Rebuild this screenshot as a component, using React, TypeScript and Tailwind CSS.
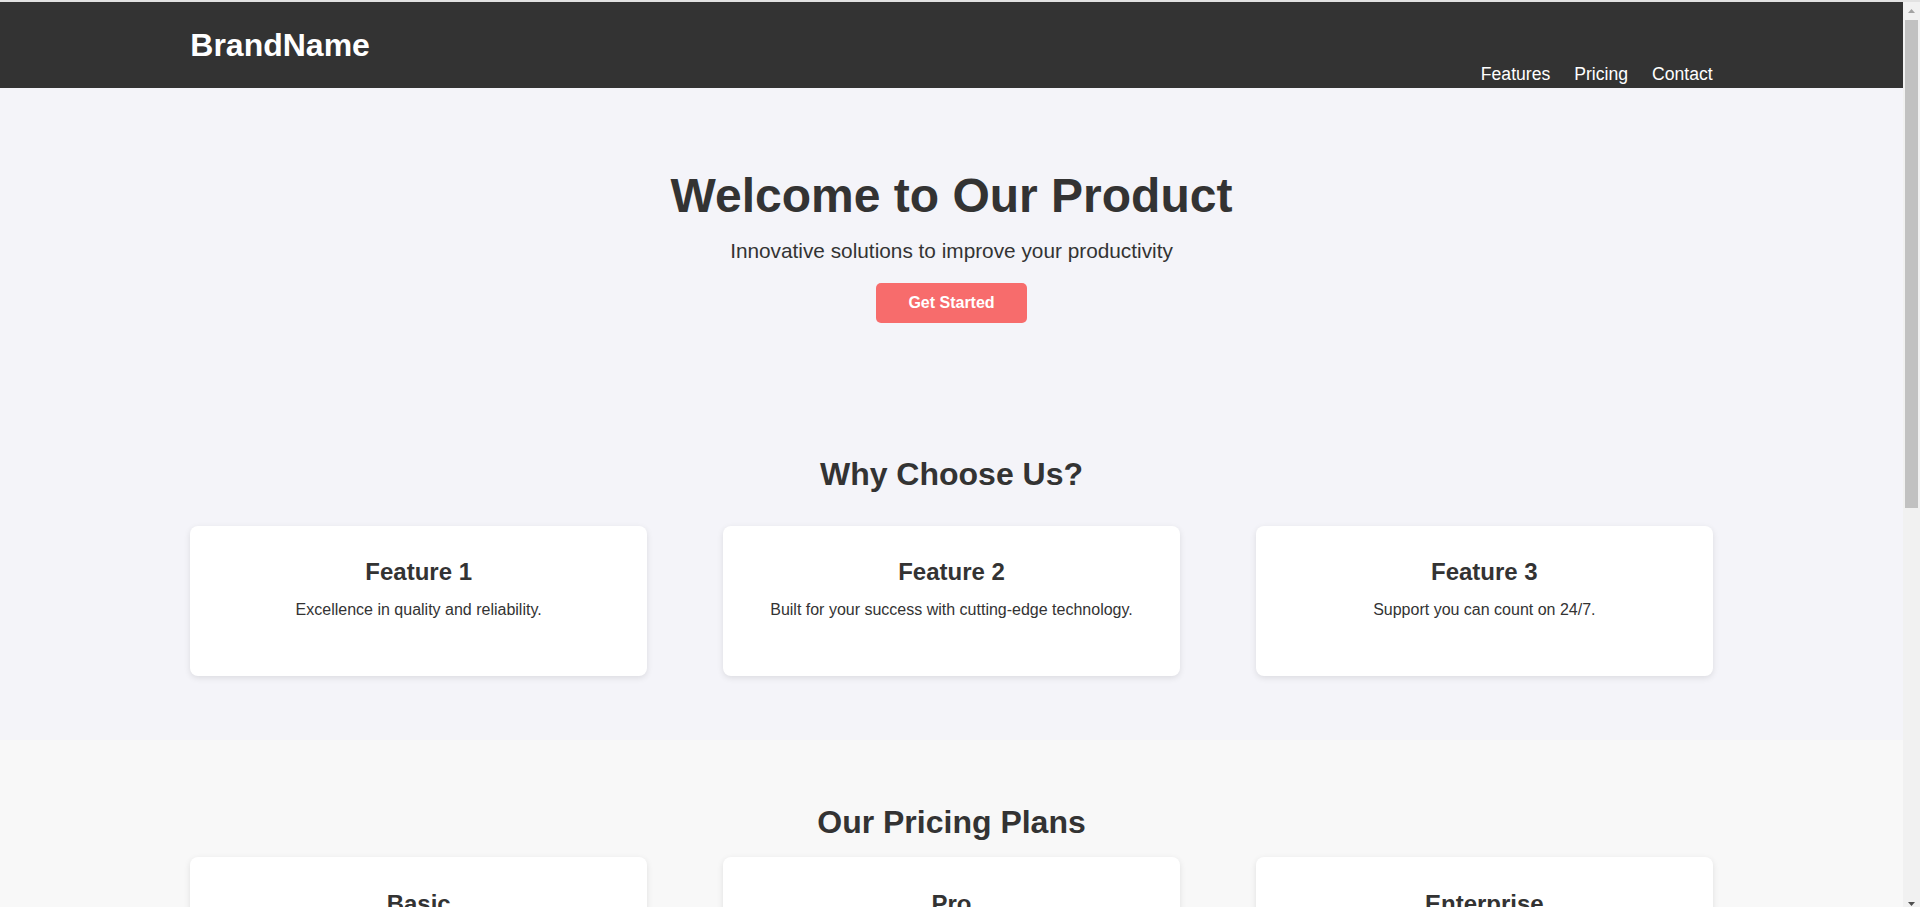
import React from "react";

const features = [
  { title: "Feature 1", text: "Excellence in quality and reliability." },
  { title: "Feature 2", text: "Built for your success with cutting-edge technology." },
  { title: "Feature 3", text: "Support you can count on 24/7." },
];

const plans = [
  { name: "Basic", price: "$9/month", items: ["Feature A", "Feature B", "Email Support"] },
  { name: "Pro", price: "$29/month", items: ["Everything in Basic", "Feature C", "Priority Support"] },
  { name: "Enterprise", price: "$99/month", items: ["Everything in Pro", "Dedicated Manager", "24/7 Phone Support"] },
];

function Scrollbar() {
  return (
    <div className="w-[17px] h-[910px] shrink-0 self-start bg-[#f1f1f1] flex flex-col">
      <div className="h-[17px] flex items-center justify-center">
        <svg width="7" height="4" viewBox="0 0 7 4">
          <polygon points="3.5,0 7,4 0,4" fill="#a3a3a3" />
        </svg>
      </div>
      <div className="mt-[1px] mx-[2px] h-[488px] bg-[#c1c1c1]" />
      <div className="flex-1" />
      <div className="h-[17px] flex items-center justify-center">
        <svg width="7" height="4" viewBox="0 0 7 4">
          <polygon points="0,0 7,0 3.5,4" fill="#505050" />
        </svg>
      </div>
    </div>
  );
}

export default function App() {
  return (
    <div className="font-['Liberation_Sans',Arial,sans-serif] text-[#333] bg-[#f4f4f9] overflow-hidden">
      <div className="h-[2px] bg-[#e2e2e2]" />
      <div className="flex">
        <div className="flex-1 min-w-0">
          <header className="bg-[#333] text-white h-[86px]">
            <div className="w-[80%] mx-auto flex justify-between items-start">
              <h1 className="text-[32px] font-bold leading-[37px] mt-[25px]">BrandName</h1>
              <nav className="mt-[62px] flex gap-[24px] text-[17.6px] leading-[20px]">
                <a href="#features">Features</a>
                <a href="#pricing">Pricing</a>
                <a href="#contact">Contact</a>
              </nav>
            </div>
          </header>

          <main className="bg-[#f4f4f9] pt-[80px] pb-[64px]">
            <section className="text-center">
              <h2 className="text-[48px] font-bold leading-[55px]">Welcome to Our Product</h2>
              <p className="mt-[16px] text-[20.8px] leading-[24px]">Innovative solutions to improve your productivity</p>
              <button className="mt-[20px] px-[32px] py-[11px] leading-[18px] rounded-[5px] bg-[#f76c6c] text-white font-bold text-[16px]">
                Get Started
              </button>
            </section>

            <section id="features" className="mt-[133px] w-[80%] mx-auto text-center">
              <h2 className="text-[32px] font-bold leading-[37px]">Why Choose Us?</h2>
              <div className="mt-[33px] flex justify-between">
                {features.map((f) => (
                  <div key={f.title} className="w-[30%] h-[150px] bg-white rounded-[8px] shadow-[0_2px_6px_rgba(0,0,0,0.1)] pt-[32px]">
                    <h3 className="text-[24px] font-bold leading-[28px]">{f.title}</h3>
                    <p className="mt-[15px] text-[16px] leading-[18px]">{f.text}</p>
                  </div>
                ))}
              </div>
            </section>
          </main>

          <section id="pricing" className="bg-[#f8f8f8] pt-[64px] pb-[64px]">
            <div className="w-[80%] mx-auto text-center">
              <h2 className="text-[32px] font-bold leading-[37px]">Our Pricing Plans</h2>
              <div className="mt-[16px] flex justify-between">
                {plans.map((p) => (
                  <div key={p.name} className="w-[30%] bg-white rounded-[8px] shadow-[0_2px_6px_rgba(0,0,0,0.1)] pt-[33px] pb-[30px]">
                    <h3 className="text-[24px] font-bold leading-[28px]">{p.name}</h3>
                    <p className="mt-[15px] text-[28px] font-bold leading-[32px] text-[#f76c6c]">{p.price}</p>
                    <ul className="mt-[16px] flex flex-col gap-[10px] text-[16px] leading-[18px]">
                      {p.items.map((i) => (
                        <li key={i}>{i}</li>
                      ))}
                    </ul>
                    <button className="mt-[24px] px-[32px] py-[11px] leading-[18px] rounded-[5px] bg-[#f76c6c] text-white font-bold text-[16px]">
                      Choose Plan
                    </button>
                  </div>
                ))}
              </div>
            </div>
          </section>

          <section id="contact" className="bg-[#f4f4f9] pt-[63px] pb-[64px]">
            <div className="w-[80%] mx-auto text-center">
              <h2 className="text-[32px] font-bold leading-[37px]">Contact Us</h2>
              <form className="mt-[24px] mx-auto w-[500px] flex flex-col gap-[12px]">
                <input className="bg-white border border-[#ccc] rounded-[5px] px-[12px] py-[10px] text-[16px]" placeholder="Your Name" />
                <input className="bg-white border border-[#ccc] rounded-[5px] px-[12px] py-[10px] text-[16px]" placeholder="Your Email" />
                <textarea className="bg-white border border-[#ccc] rounded-[5px] px-[12px] py-[10px] text-[16px] h-[80px]" placeholder="Your Message" />
                <button type="button" className="self-center px-[32px] py-[11px] leading-[18px] rounded-[5px] bg-[#f76c6c] text-white font-bold text-[16px]">
                  Send Message
                </button>
              </form>
            </div>
          </section>

          <footer className="bg-[#333] text-white text-center py-[20px] text-[16px] leading-[18px]">
            © 2024 BrandName. All rights reserved.
          </footer>
        </div>
        <Scrollbar />
      </div>
    </div>
  );
}
